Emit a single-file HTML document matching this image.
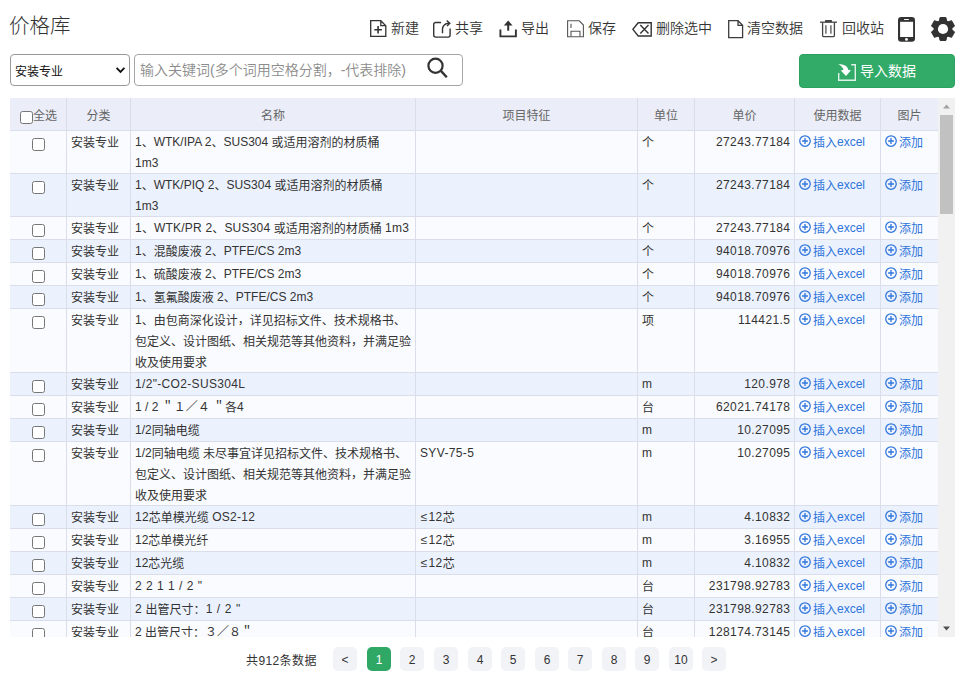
<!DOCTYPE html>
<html lang="zh-CN">
<head>
<meta charset="utf-8">
<title>价格库</title>
<style>
html,body{margin:0;padding:0;background:#fff;}
body{width:965px;height:689px;position:relative;overflow:hidden;font-family:"Liberation Sans","Noto Sans CJK SC",sans-serif;color:#333;font-size:12px;}
.abs{position:absolute;}
#title{left:9px;top:11px;font-size:20.5px;line-height:30px;color:#333;font-weight:300;}
.tb{position:absolute;top:19px;height:20px;line-height:20px;font-size:14px;color:#333;white-space:nowrap;font-weight:350;}
.tb svg{position:absolute;left:0;top:0;}
.tb span{position:absolute;top:-1px;}
#sel{left:10px;top:54px;width:120px;height:32px;box-sizing:border-box;border:1px solid #999;border-radius:4px;background:#fff;}
#sel span{position:absolute;left:4px;top:1px;line-height:32px;font-size:12px;color:#111;}
#sel svg{position:absolute;left:104px;top:11px;}
#inp{left:134px;top:54px;width:329px;height:32px;box-sizing:border-box;border:1px solid #a6a6a6;border-radius:4px;background:#fff;}
#inp span{position:absolute;left:5px;top:0;line-height:30px;font-size:14px;color:#8c8c8c;white-space:nowrap;font-weight:350;}
#inp svg{position:absolute;left:291px;top:2px;}
#btn{left:799px;top:54px;width:156px;height:34px;box-sizing:border-box;border:1px solid #2ba25f;border-radius:4px;background:#32ab69;color:#fff;font-size:14px;}
#btn span{position:absolute;left:60px;top:0px;line-height:33px;white-space:nowrap;}
#btn svg{position:absolute;left:38px;top:9px;}
#wrap{left:10px;top:98px;width:945px;height:539px;overflow:hidden;background:#fff;}
table{border-collapse:separate;border-spacing:0;table-layout:fixed;width:928px;font-size:12px;line-height:21px;color:#333;}
th{height:32px;box-sizing:border-box;background:#ebeef8;border-left:1px solid #dadeea;font-weight:normal;color:#666;text-align:center;padding:0;line-height:32px;position:relative;}
th>b{font-weight:normal;position:relative;top:2px;}
th:first-child,td:first-child{border-left:0;}
td{box-sizing:border-box;border-left:1px solid #dadeea;border-top:1px solid #dadeea;padding:0 4px;vertical-align:top;white-space:nowrap;overflow:hidden;}
tr.o td{background:#fafbfe;}
tr.e td{background:#ecf2fd;}
td>div{position:relative;top:2px;}
td i{font-style:normal;position:relative;top:-1px;}
td.pr{text-align:right;}
td i.n{letter-spacing:0.4px;}
td.pr i.n{margin-right:-0.4px;}
td.lk{color:#2d74dc;}
td.ck{position:relative;padding:0;}
.cb{position:absolute;left:22px;top:7px;width:13px;height:13px;box-sizing:border-box;border:1px solid #767676;border-radius:2.5px;background:#fff;}
.pl{width:12px;height:12px;vertical-align:0px;margin-right:2px;position:relative;}
#sb{left:928px;top:0;width:17px;height:539px;background:#f1f1f1;}
#thumb{left:2px;top:17px;width:13px;height:99px;background:#c1c1c1;}
.pb{position:absolute;top:647px;width:24px;height:24px;line-height:26px;text-align:center;border-radius:5px;background:#f2f3f7;color:#333;font-size:12px;}
.pb.on{background:#2fa866;color:#fff;}
#tot{left:246px;top:649px;line-height:24px;font-size:12px;letter-spacing:0.4px;color:#333;white-space:nowrap;}
</style>
</head>
<body>
<div id="title" class="abs">价格库</div>

<div class="tb" style="left:370px;width:50px"><svg width="17" height="19" viewBox="0 0 17 19"><path d="M0.7 1.7h10.1l5 5v10.6H0.7z M10.8 1.7v5h5" fill="none" stroke="#333" stroke-width="1.3"/><path d="M8.1 6.9v7.6M4.3 10.7h7.6" stroke="#333" stroke-width="1.6" fill="none"/></svg><span style="left:21px">新建</span></div>
<div class="tb" style="left:433px;width:52px"><svg width="19" height="20" viewBox="0 0 19 20"><path d="M8 3.5H2.7a2 2 0 0 0-2 2V16.1a2 2 0 0 0 2 2H15.1a2 2 0 0 0 2-2V9.6" fill="none" stroke="#333" stroke-width="1.4"/><path d="M9.5 14.2V10.2a6 6 0 0 1 6-6h0.8" fill="none" stroke="#333" stroke-width="1.4"/><path d="M13.7 1.5l3.1 2.7-2.8 2.8" fill="none" stroke="#333" stroke-width="1.4"/></svg><span style="left:22px">共享</span></div>
<div class="tb" style="left:499px;width:52px"><svg width="19" height="20" viewBox="0 0 19 20"><path d="M1.4 10.5V17.4H16.9V10.5" fill="none" stroke="#333" stroke-width="1.9"/><path d="M9.2 4V11.7" fill="none" stroke="#333" stroke-width="2"/><path d="M9.2 1.4L13.6 6.6H4.8z" fill="#333"/></svg><span style="left:22px">导出</span></div>
<div class="tb" style="left:567px;width:52px"><svg width="17" height="19" viewBox="0 0 17 19"><path d="M0.6 1.8h11.6l4.2 4.2v11.7H0.6z" fill="none" stroke="#555" stroke-width="1.1"/><path d="M4 17.5v-5.3h9v5.3M4 4.7v4.2" fill="none" stroke="#555" stroke-width="1.1"/></svg><span style="left:21px">保存</span></div>
<div class="tb" style="left:632px;width:82px"><svg width="20" height="18" viewBox="0 0 20 18"><path d="M6.2 3.7h13v13.3h-13L0.9 10.35z" fill="none" stroke="#333" stroke-width="1.4"/><path d="M8.3 6l8.2 8.6M16.5 6l-8.2 8.6" fill="none" stroke="#333" stroke-width="1.4"/></svg><span style="left:24px">删除选中</span></div>
<div class="tb" style="left:728px;width:80px"><svg width="16" height="20" viewBox="0 0 16 20"><path d="M0.7 1.7h9.3l4.6 4.6v12.3H0.7z M10 1.7v4.6h4.6" fill="none" stroke="#3c3c3c" stroke-width="1.3"/></svg><span style="left:19px">清空数据</span></div>
<div class="tb" style="left:820px;width:66px"><svg width="17" height="19" viewBox="0 0 17 19"><path d="M0 3.2h17" stroke="#444" stroke-width="1.3" fill="none"/><rect x="5" y="1.1" width="7" height="2" rx="0.6" fill="#444"/><path d="M2.6 3.4v13.4a0.8 0.8 0 0 0 0.8 0.8h10.2a0.8 0.8 0 0 0 0.8-0.8V3.4" fill="none" stroke="#444" stroke-width="1.3"/><path d="M5.9 6.3v8.4M10.9 6.3v8.4" stroke="#555" stroke-width="1.3" fill="none"/></svg><span style="left:22px">回收站</span></div>

<svg class="abs" style="left:897px;top:16px" width="19" height="27" viewBox="0 0 19 27"><rect x="1" y="1" width="17" height="24.7" rx="3.2" fill="#333"/><rect x="3.1" y="5.8" width="13" height="15.2" fill="#fff"/><rect x="7" y="2.9" width="5" height="1.1" rx="0.55" fill="#fff"/><circle cx="9.5" cy="23.4" r="1.4" fill="#fff"/></svg>

<svg class="abs" style="left:930px;top:16px" width="26" height="26" viewBox="-13 -13 26 26"><g fill="#333" stroke="#333" stroke-width="1" stroke-linejoin="round"><circle r="8.8"/><path d="M-2.9 -11.5h5.8l0.9 4h-7.6z" transform="rotate(0)"/><path d="M-2.9 -11.5h5.8l0.9 4h-7.6z" transform="rotate(60)"/><path d="M-2.9 -11.5h5.8l0.9 4h-7.6z" transform="rotate(120)"/><path d="M-2.9 -11.5h5.8l0.9 4h-7.6z" transform="rotate(180)"/><path d="M-2.9 -11.5h5.8l0.9 4h-7.6z" transform="rotate(240)"/><path d="M-2.9 -11.5h5.8l0.9 4h-7.6z" transform="rotate(300)"/></g><circle r="5.1" fill="#fff"/></svg>

<div id="sel" class="abs"><span>安装专业</span><svg width="11" height="8" viewBox="0 0 11 8"><path d="M1.6 1.9l3.9 3.9 3.9-3.9" fill="none" stroke="#111" stroke-width="1.9"/></svg></div>
<div id="inp" class="abs"><span>输入关键词(多个词用空格分割，-代表排除)</span><svg width="24" height="24" viewBox="0 0 24 24"><circle cx="9.5" cy="8.8" r="7.1" fill="none" stroke="#333" stroke-width="2.2"/><path d="M14.9 13.9L20.8 20.3" stroke="#333" stroke-width="2.4" fill="none"/></svg></div>

<div id="btn" class="abs"><svg width="18" height="17" viewBox="0 0 18 17"><path d="M0.7 9V16.3H17.3V0.7H13.2" fill="none" stroke="#fff" stroke-opacity="0.85" stroke-width="1.4"/><path d="M0.2 0.2C5 0 9.5 1.5 10.4 6L13 6.2 8 12 2.8 6.4 5.6 5.7C5 3.5 3 1.5 0.2 0.2z" fill="#fff"/></svg><span>导入数据</span></div>

<div id="wrap" class="abs">
<table>
<colgroup><col style="width:56px"><col style="width:64px"><col style="width:285px"><col style="width:222px"><col style="width:57px"><col style="width:100px"><col style="width:86px"><col style="width:58px"></colgroup>
<thead><tr><th><span class="cb" style="left:10px;top:13px"></span><span style="position:absolute;left:23px;top:2px;line-height:32px">全选</span></th><th><b>分类</b></th><th><b>名称</b></th><th><b>项目特征</b></th><th><b>单位</b></th><th><b>单价</b></th><th><b>使用数据</b></th><th><b>图片</b></th></tr></thead>
<tbody>
<tr class="o" style="height:43px"><td class="ck"><span class="cb"></span></td><td><div>安装专业</div></td><td class="nm"><div><i>1</i>、<i>WTK/IPA 2</i>、<i>SUS304</i> 或适用溶剂的材质桶<br><i>1m3</i></div></td><td><div></div></td><td><div>个</div></td><td class="pr"><div><i class="n">27243.77184</i></div></td><td class="lk"><div><svg class="pl" viewBox="0 0 12 12"><circle cx="6" cy="6" r="5.25" fill="none" stroke="currentColor" stroke-width="1.25"/><path d="M6 3.1v5.8M3.1 6h5.8" stroke="currentColor" stroke-width="1.3" fill="none"/></svg>插入<i>excel</i></div></td><td class="lk"><div><svg class="pl" viewBox="0 0 12 12"><circle cx="6" cy="6" r="5.25" fill="none" stroke="currentColor" stroke-width="1.25"/><path d="M6 3.1v5.8M3.1 6h5.8" stroke="currentColor" stroke-width="1.3" fill="none"/></svg>添加</div></td></tr>
<tr class="e" style="height:43px"><td class="ck"><span class="cb"></span></td><td><div>安装专业</div></td><td class="nm"><div><i>1</i>、<i>WTK/PIQ 2</i>、<i>SUS304</i> 或适用溶剂的材质桶<br><i>1m3</i></div></td><td><div></div></td><td><div>个</div></td><td class="pr"><div><i class="n">27243.77184</i></div></td><td class="lk"><div><svg class="pl" viewBox="0 0 12 12"><circle cx="6" cy="6" r="5.25" fill="none" stroke="currentColor" stroke-width="1.25"/><path d="M6 3.1v5.8M3.1 6h5.8" stroke="currentColor" stroke-width="1.3" fill="none"/></svg>插入<i>excel</i></div></td><td class="lk"><div><svg class="pl" viewBox="0 0 12 12"><circle cx="6" cy="6" r="5.25" fill="none" stroke="currentColor" stroke-width="1.25"/><path d="M6 3.1v5.8M3.1 6h5.8" stroke="currentColor" stroke-width="1.3" fill="none"/></svg>添加</div></td></tr>
<tr class="o" style="height:23px"><td class="ck"><span class="cb"></span></td><td><div>安装专业</div></td><td class="nm"><div><i style="letter-spacing:0.22px">1</i>、<i style="letter-spacing:0.22px">WTK/PR 2</i>、<i style="letter-spacing:0.22px">SUS304</i> 或适用溶剂的材质桶 <i style="letter-spacing:0.22px">1m3</i></div></td><td><div></div></td><td><div>个</div></td><td class="pr"><div><i class="n">27243.77184</i></div></td><td class="lk"><div><svg class="pl" viewBox="0 0 12 12"><circle cx="6" cy="6" r="5.25" fill="none" stroke="currentColor" stroke-width="1.25"/><path d="M6 3.1v5.8M3.1 6h5.8" stroke="currentColor" stroke-width="1.3" fill="none"/></svg>插入<i>excel</i></div></td><td class="lk"><div><svg class="pl" viewBox="0 0 12 12"><circle cx="6" cy="6" r="5.25" fill="none" stroke="currentColor" stroke-width="1.25"/><path d="M6 3.1v5.8M3.1 6h5.8" stroke="currentColor" stroke-width="1.3" fill="none"/></svg>添加</div></td></tr>
<tr class="e" style="height:23px"><td class="ck"><span class="cb"></span></td><td><div>安装专业</div></td><td class="nm"><div><i>1</i>、混酸废液 <i>2</i>、<i>PTFE/CS 2m3</i></div></td><td><div></div></td><td><div>个</div></td><td class="pr"><div><i class="n">94018.70976</i></div></td><td class="lk"><div><svg class="pl" viewBox="0 0 12 12"><circle cx="6" cy="6" r="5.25" fill="none" stroke="currentColor" stroke-width="1.25"/><path d="M6 3.1v5.8M3.1 6h5.8" stroke="currentColor" stroke-width="1.3" fill="none"/></svg>插入<i>excel</i></div></td><td class="lk"><div><svg class="pl" viewBox="0 0 12 12"><circle cx="6" cy="6" r="5.25" fill="none" stroke="currentColor" stroke-width="1.25"/><path d="M6 3.1v5.8M3.1 6h5.8" stroke="currentColor" stroke-width="1.3" fill="none"/></svg>添加</div></td></tr>
<tr class="o" style="height:23px"><td class="ck"><span class="cb"></span></td><td><div>安装专业</div></td><td class="nm"><div><i>1</i>、硫酸废液 <i>2</i>、<i>PTFE/CS 2m3</i></div></td><td><div></div></td><td><div>个</div></td><td class="pr"><div><i class="n">94018.70976</i></div></td><td class="lk"><div><svg class="pl" viewBox="0 0 12 12"><circle cx="6" cy="6" r="5.25" fill="none" stroke="currentColor" stroke-width="1.25"/><path d="M6 3.1v5.8M3.1 6h5.8" stroke="currentColor" stroke-width="1.3" fill="none"/></svg>插入<i>excel</i></div></td><td class="lk"><div><svg class="pl" viewBox="0 0 12 12"><circle cx="6" cy="6" r="5.25" fill="none" stroke="currentColor" stroke-width="1.25"/><path d="M6 3.1v5.8M3.1 6h5.8" stroke="currentColor" stroke-width="1.3" fill="none"/></svg>添加</div></td></tr>
<tr class="e" style="height:23px"><td class="ck"><span class="cb"></span></td><td><div>安装专业</div></td><td class="nm"><div><i>1</i>、氢氟酸废液 <i>2</i>、<i>PTFE/CS 2m3</i></div></td><td><div></div></td><td><div>个</div></td><td class="pr"><div><i class="n">94018.70976</i></div></td><td class="lk"><div><svg class="pl" viewBox="0 0 12 12"><circle cx="6" cy="6" r="5.25" fill="none" stroke="currentColor" stroke-width="1.25"/><path d="M6 3.1v5.8M3.1 6h5.8" stroke="currentColor" stroke-width="1.3" fill="none"/></svg>插入<i>excel</i></div></td><td class="lk"><div><svg class="pl" viewBox="0 0 12 12"><circle cx="6" cy="6" r="5.25" fill="none" stroke="currentColor" stroke-width="1.25"/><path d="M6 3.1v5.8M3.1 6h5.8" stroke="currentColor" stroke-width="1.3" fill="none"/></svg>添加</div></td></tr>
<tr class="o" style="height:64px"><td class="ck"><span class="cb"></span></td><td><div>安装专业</div></td><td class="nm"><div><i>1</i>、由包商深化设计<i>，</i>详见招标文件、技术规格书、<br>包定义、设计图纸、相关规范等其他资料<i>，</i>并满足验<br>收及使用要求</div></td><td><div></div></td><td><div>项</div></td><td class="pr"><div><i class="n">114421.5</i></div></td><td class="lk"><div><svg class="pl" viewBox="0 0 12 12"><circle cx="6" cy="6" r="5.25" fill="none" stroke="currentColor" stroke-width="1.25"/><path d="M6 3.1v5.8M3.1 6h5.8" stroke="currentColor" stroke-width="1.3" fill="none"/></svg>插入<i>excel</i></div></td><td class="lk"><div><svg class="pl" viewBox="0 0 12 12"><circle cx="6" cy="6" r="5.25" fill="none" stroke="currentColor" stroke-width="1.25"/><path d="M6 3.1v5.8M3.1 6h5.8" stroke="currentColor" stroke-width="1.3" fill="none"/></svg>添加</div></td></tr>
<tr class="e" style="height:23px"><td class="ck"><span class="cb"></span></td><td><div>安装专业</div></td><td class="nm"><div><i style="letter-spacing:0.33px">1/2"-CO2-SUS304L</i></div></td><td><div></div></td><td><div><i>m</i></div></td><td class="pr"><div><i class="n">120.978</i></div></td><td class="lk"><div><svg class="pl" viewBox="0 0 12 12"><circle cx="6" cy="6" r="5.25" fill="none" stroke="currentColor" stroke-width="1.25"/><path d="M6 3.1v5.8M3.1 6h5.8" stroke="currentColor" stroke-width="1.3" fill="none"/></svg>插入<i>excel</i></div></td><td class="lk"><div><svg class="pl" viewBox="0 0 12 12"><circle cx="6" cy="6" r="5.25" fill="none" stroke="currentColor" stroke-width="1.25"/><path d="M6 3.1v5.8M3.1 6h5.8" stroke="currentColor" stroke-width="1.3" fill="none"/></svg>添加</div></td></tr>
<tr class="o" style="height:23px"><td class="ck"><span class="cb"></span></td><td><div>安装专业</div></td><td class="nm"><div><i>1 / 2 ＂１／４ ＂</i>各<i>4</i></div></td><td><div></div></td><td><div>台</div></td><td class="pr"><div><i class="n">62021.74178</i></div></td><td class="lk"><div><svg class="pl" viewBox="0 0 12 12"><circle cx="6" cy="6" r="5.25" fill="none" stroke="currentColor" stroke-width="1.25"/><path d="M6 3.1v5.8M3.1 6h5.8" stroke="currentColor" stroke-width="1.3" fill="none"/></svg>插入<i>excel</i></div></td><td class="lk"><div><svg class="pl" viewBox="0 0 12 12"><circle cx="6" cy="6" r="5.25" fill="none" stroke="currentColor" stroke-width="1.25"/><path d="M6 3.1v5.8M3.1 6h5.8" stroke="currentColor" stroke-width="1.3" fill="none"/></svg>添加</div></td></tr>
<tr class="e" style="height:23px"><td class="ck"><span class="cb"></span></td><td><div>安装专业</div></td><td class="nm"><div><i>1/2</i>同轴电缆</div></td><td><div></div></td><td><div><i>m</i></div></td><td class="pr"><div><i class="n">10.27095</i></div></td><td class="lk"><div><svg class="pl" viewBox="0 0 12 12"><circle cx="6" cy="6" r="5.25" fill="none" stroke="currentColor" stroke-width="1.25"/><path d="M6 3.1v5.8M3.1 6h5.8" stroke="currentColor" stroke-width="1.3" fill="none"/></svg>插入<i>excel</i></div></td><td class="lk"><div><svg class="pl" viewBox="0 0 12 12"><circle cx="6" cy="6" r="5.25" fill="none" stroke="currentColor" stroke-width="1.25"/><path d="M6 3.1v5.8M3.1 6h5.8" stroke="currentColor" stroke-width="1.3" fill="none"/></svg>添加</div></td></tr>
<tr class="o" style="height:64px"><td class="ck"><span class="cb"></span></td><td><div>安装专业</div></td><td class="nm"><div><i>1/2</i>同轴电缆 未尽事宜详见招标文件、技术规格书、<br>包定义、设计图纸、相关规范等其他资料<i>，</i>并满足验<br>收及使用要求</div></td><td><div><i style="letter-spacing:0.35px">SYV-75-5</i></div></td><td><div><i>m</i></div></td><td class="pr"><div><i class="n">10.27095</i></div></td><td class="lk"><div><svg class="pl" viewBox="0 0 12 12"><circle cx="6" cy="6" r="5.25" fill="none" stroke="currentColor" stroke-width="1.25"/><path d="M6 3.1v5.8M3.1 6h5.8" stroke="currentColor" stroke-width="1.3" fill="none"/></svg>插入<i>excel</i></div></td><td class="lk"><div><svg class="pl" viewBox="0 0 12 12"><circle cx="6" cy="6" r="5.25" fill="none" stroke="currentColor" stroke-width="1.25"/><path d="M6 3.1v5.8M3.1 6h5.8" stroke="currentColor" stroke-width="1.3" fill="none"/></svg>添加</div></td></tr>
<tr class="e" style="height:23px"><td class="ck"><span class="cb"></span></td><td><div>安装专业</div></td><td class="nm"><div><i style="letter-spacing:0.25px">12</i>芯单模光缆 <i style="letter-spacing:0.25px">OS2-12</i></div></td><td><div><i style="letter-spacing:0.4px"><i style="top:0;margin:0 0.8px 0 0.7px">≤</i>12</i>芯</div></td><td><div><i>m</i></div></td><td class="pr"><div><i class="n">4.10832</i></div></td><td class="lk"><div><svg class="pl" viewBox="0 0 12 12"><circle cx="6" cy="6" r="5.25" fill="none" stroke="currentColor" stroke-width="1.25"/><path d="M6 3.1v5.8M3.1 6h5.8" stroke="currentColor" stroke-width="1.3" fill="none"/></svg>插入<i>excel</i></div></td><td class="lk"><div><svg class="pl" viewBox="0 0 12 12"><circle cx="6" cy="6" r="5.25" fill="none" stroke="currentColor" stroke-width="1.25"/><path d="M6 3.1v5.8M3.1 6h5.8" stroke="currentColor" stroke-width="1.3" fill="none"/></svg>添加</div></td></tr>
<tr class="o" style="height:23px"><td class="ck"><span class="cb"></span></td><td><div>安装专业</div></td><td class="nm"><div><i>12</i>芯单模光纤</div></td><td><div><i style="letter-spacing:0.4px"><i style="top:0;margin:0 0.8px 0 0.7px">≤</i>12</i>芯</div></td><td><div><i>m</i></div></td><td class="pr"><div><i class="n">3.16955</i></div></td><td class="lk"><div><svg class="pl" viewBox="0 0 12 12"><circle cx="6" cy="6" r="5.25" fill="none" stroke="currentColor" stroke-width="1.25"/><path d="M6 3.1v5.8M3.1 6h5.8" stroke="currentColor" stroke-width="1.3" fill="none"/></svg>插入<i>excel</i></div></td><td class="lk"><div><svg class="pl" viewBox="0 0 12 12"><circle cx="6" cy="6" r="5.25" fill="none" stroke="currentColor" stroke-width="1.25"/><path d="M6 3.1v5.8M3.1 6h5.8" stroke="currentColor" stroke-width="1.3" fill="none"/></svg>添加</div></td></tr>
<tr class="e" style="height:23px"><td class="ck"><span class="cb"></span></td><td><div>安装专业</div></td><td class="nm"><div><i>12</i>芯光缆</div></td><td><div><i style="letter-spacing:0.4px"><i style="top:0;margin:0 0.8px 0 0.7px">≤</i>12</i>芯</div></td><td><div><i>m</i></div></td><td class="pr"><div><i class="n">4.10832</i></div></td><td class="lk"><div><svg class="pl" viewBox="0 0 12 12"><circle cx="6" cy="6" r="5.25" fill="none" stroke="currentColor" stroke-width="1.25"/><path d="M6 3.1v5.8M3.1 6h5.8" stroke="currentColor" stroke-width="1.3" fill="none"/></svg>插入<i>excel</i></div></td><td class="lk"><div><svg class="pl" viewBox="0 0 12 12"><circle cx="6" cy="6" r="5.25" fill="none" stroke="currentColor" stroke-width="1.25"/><path d="M6 3.1v5.8M3.1 6h5.8" stroke="currentColor" stroke-width="1.3" fill="none"/></svg>添加</div></td></tr>
<tr class="o" style="height:23px"><td class="ck"><span class="cb"></span></td><td><div>安装专业</div></td><td class="nm"><div><i style="letter-spacing:0.5px">2 2 1 1 / 2 "</i></div></td><td><div></div></td><td><div>台</div></td><td class="pr"><div><i class="n">231798.92783</i></div></td><td class="lk"><div><svg class="pl" viewBox="0 0 12 12"><circle cx="6" cy="6" r="5.25" fill="none" stroke="currentColor" stroke-width="1.25"/><path d="M6 3.1v5.8M3.1 6h5.8" stroke="currentColor" stroke-width="1.3" fill="none"/></svg>插入<i>excel</i></div></td><td class="lk"><div><svg class="pl" viewBox="0 0 12 12"><circle cx="6" cy="6" r="5.25" fill="none" stroke="currentColor" stroke-width="1.25"/><path d="M6 3.1v5.8M3.1 6h5.8" stroke="currentColor" stroke-width="1.3" fill="none"/></svg>添加</div></td></tr>
<tr class="e" style="height:23px"><td class="ck"><span class="cb"></span></td><td><div>安装专业</div></td><td class="nm"><div><i style="letter-spacing:0.6px">2</i> 出管尺寸：<i style="letter-spacing:0.6px">1 / 2 "</i></div></td><td><div></div></td><td><div>台</div></td><td class="pr"><div><i class="n">231798.92783</i></div></td><td class="lk"><div><svg class="pl" viewBox="0 0 12 12"><circle cx="6" cy="6" r="5.25" fill="none" stroke="currentColor" stroke-width="1.25"/><path d="M6 3.1v5.8M3.1 6h5.8" stroke="currentColor" stroke-width="1.3" fill="none"/></svg>插入<i>excel</i></div></td><td class="lk"><div><svg class="pl" viewBox="0 0 12 12"><circle cx="6" cy="6" r="5.25" fill="none" stroke="currentColor" stroke-width="1.25"/><path d="M6 3.1v5.8M3.1 6h5.8" stroke="currentColor" stroke-width="1.3" fill="none"/></svg>添加</div></td></tr>
<tr class="o" style="height:23px"><td class="ck"><span class="cb"></span></td><td><div>安装专业</div></td><td class="nm"><div><i>2</i> 出管尺寸：<i>３／８＂</i></div></td><td><div></div></td><td><div>台</div></td><td class="pr"><div><i class="n">128174.73145</i></div></td><td class="lk"><div><svg class="pl" viewBox="0 0 12 12"><circle cx="6" cy="6" r="5.25" fill="none" stroke="currentColor" stroke-width="1.25"/><path d="M6 3.1v5.8M3.1 6h5.8" stroke="currentColor" stroke-width="1.3" fill="none"/></svg>插入<i>excel</i></div></td><td class="lk"><div><svg class="pl" viewBox="0 0 12 12"><circle cx="6" cy="6" r="5.25" fill="none" stroke="currentColor" stroke-width="1.25"/><path d="M6 3.1v5.8M3.1 6h5.8" stroke="currentColor" stroke-width="1.3" fill="none"/></svg>添加</div></td></tr>
</tbody>
</table>
<div id="sb" class="abs"><svg class="abs" style="left:5px;top:6px" width="7" height="5" viewBox="0 0 7 5"><path d="M0 4.5L3.5 0.5 7 4.5z" fill="#a3a3a3"/></svg><div id="thumb" class="abs"></div><svg class="abs" style="left:5px;top:528px" width="7" height="5" viewBox="0 0 7 5"><path d="M0 0.5h7L3.5 4.5z" fill="#505050"/></svg></div>
</div>

<div id="tot" class="abs">共912条数据</div>
<span class="pb " style="left:333px">&lt;</span><span class="pb on" style="left:367px">1</span><span class="pb " style="left:400px">2</span><span class="pb " style="left:434px">3</span><span class="pb " style="left:468px">4</span><span class="pb " style="left:501px">5</span><span class="pb " style="left:535px">6</span><span class="pb " style="left:568px">7</span><span class="pb " style="left:602px">8</span><span class="pb " style="left:635px">9</span><span class="pb " style="left:669px">10</span><span class="pb " style="left:702px">&gt;</span>
</body>
</html>
